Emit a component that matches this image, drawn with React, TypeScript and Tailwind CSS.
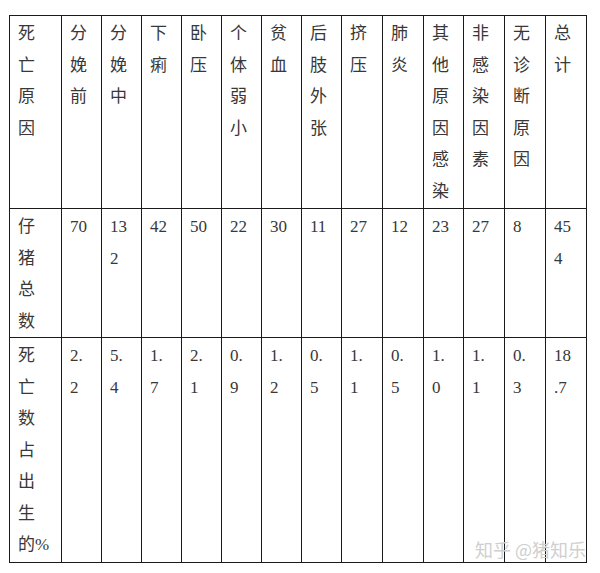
import React from "react";

const colClasses = [
  "w-[52px]",
  "w-[40px]",
  "w-[40px]",
  "w-[40px]",
  "w-[40px]",
  "w-[40px]",
  "w-[40px]",
  "w-[40px]",
  "w-[41px]",
  "w-[41px]",
  "w-[40px]",
  "w-[41px]",
  "w-[41px]",
  "w-[41px]",
];

const rows: { heightClass: string; cells: string[] }[] = [
  {
    heightClass: "h-[193px]",
    cells: [
      "死亡原因",
      "分娩前",
      "分娩中",
      "下痢",
      "卧压",
      "个体弱小",
      "贫血",
      "后肢外张",
      "挤压",
      "肺炎",
      "其他原因感染",
      "非感染因素",
      "无诊断原因",
      "总计",
    ],
  },
  {
    heightClass: "h-[129px]",
    cells: ["仔猪总数", "70", "132", "42", "50", "22", "30", "11", "27", "12", "23", "27", "8", "454"],
  },
  {
    heightClass: "h-[225px]",
    cells: ["死亡数占出生的%", "2.2", "5.4", "1.7", "2.1", "0.9", "1.2", "0.5", "1.1", "0.5", "1.0", "1.1", "0.3", "18.7"],
  },
];

export default function App() {
  return (
    <div className="relative w-[600px] h-[573px] bg-white overflow-hidden">
      <div className="pt-[15px] pl-[9px]">
        <table className="table-fixed border-collapse w-[577px] text-[17px] leading-[31.5px] text-[#383838] font-['Liberation_Serif','Noto_Sans_CJK_SC',serif]">
          <colgroup>
            {colClasses.map((cls, i) => (
              <col key={i} className={cls} />
            ))}
          </colgroup>
          <tbody>
            {rows.map((row, r) => (
              <tr key={r} className={row.heightClass}>
                {row.cells.map((text, c) => (
                  <td
                    key={c}
                    className="border border-[#1a1a1a] align-top p-0 pl-[8px] pt-[2px]"
                  >
                    <div
                      className={
                        c === 0
                          ? "w-[32px] break-all [line-break:anywhere]"
                          : "w-[19px] break-all [line-break:anywhere]"
                      }
                    >
                      {text}
                    </div>
                  </td>
                ))}
              </tr>
            ))}
          </tbody>
        </table>
      </div>

      {/* watermark */}
      <div className="absolute left-[475px] top-[537px] text-[18px] leading-[24px] text-[#cfcfcf] whitespace-nowrap font-['Noto_Sans_CJK_SC',sans-serif]">
        知乎 @猪知乐
      </div>
    </div>
  );
}
